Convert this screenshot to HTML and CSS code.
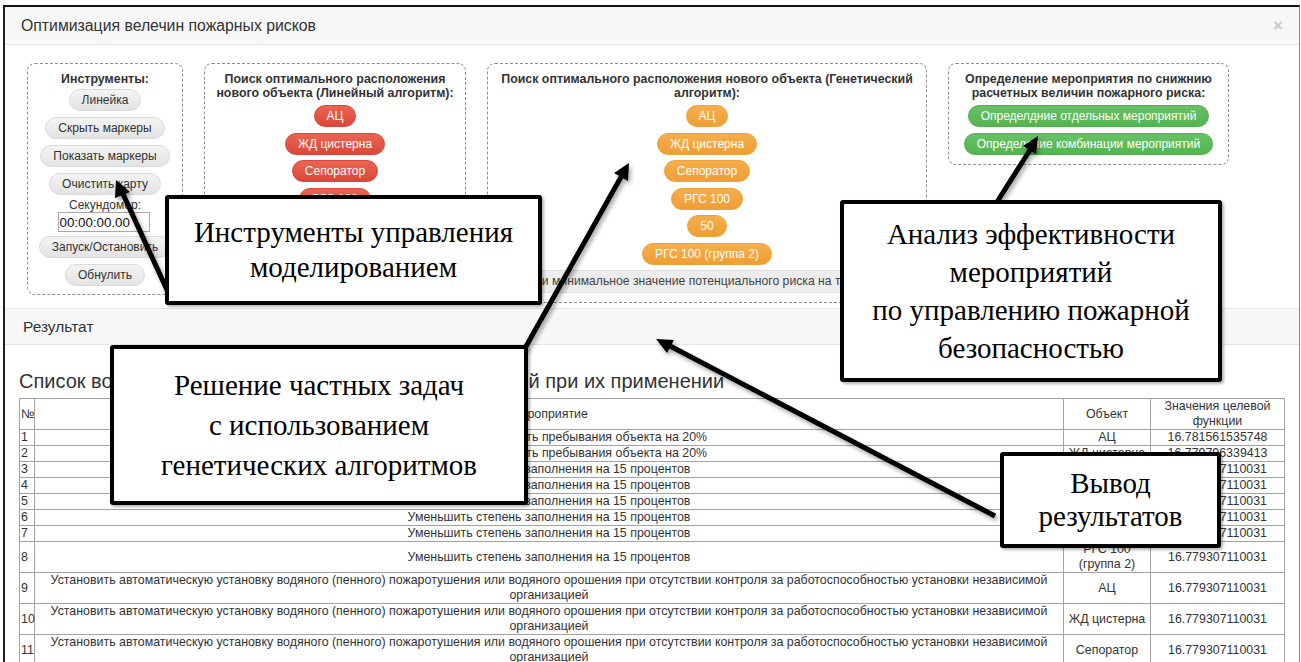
FILE: index.html
```html
<!DOCTYPE html>
<html lang="ru">
<head>
<meta charset="utf-8">
<title>Оптимизация велечин пожарных рисков</title>
<link rel="stylesheet" href="styles.css">
</head>
<body>
<div class="frame">
  <div class="modal-header">
    <span class="modal-title">Оптимизация велечин пожарных рисков</span>
    <span class="close">×</span>
  </div>

  <div class="controls">
    <section class="panel panel-tools">
      <div class="panel-title tools-title">Инструменты:</div>
      <span class="btn btn-gray">Линейка</span>
      <span class="btn btn-gray gap">Скрыть маркеры</span>
      <span class="btn btn-gray gap">Показать маркеры</span>
      <span class="btn btn-gray gap">Очистить карту</span>
      <div class="stopwatch-label">Секундомер:</div>
      <input class="stopwatch" type="text" value="00:00:00.00">
      <span class="btn btn-gray gap-sm">Запуск/Остановить</span>
      <span class="btn btn-gray gap">Обнулить</span>
    </section>

    <section class="panel panel-linear">
      <div class="panel-title">Поиск оптимального расположения<br>нового объекта (Линейный алгоритм):</div>
      <span class="btn btn-red">АЦ</span>
      <span class="btn btn-red step">ЖД цистерна</span>
      <span class="btn btn-red step">Сепоратор</span>
      <span class="btn btn-red step">РГС 100</span>
      <span class="btn btn-red step">50</span>
      <span class="btn btn-red step">РГС 100 (группа 2)</span>
    </section>

    <section class="panel panel-genetic">
      <div class="panel-title">Поиск оптимального расположения нового объекта (Генетический<br>алгоритм):</div>
      <span class="btn btn-orange">АЦ</span>
      <span class="btn btn-orange step">ЖД цистерна</span>
      <span class="btn btn-orange step">Сепоратор</span>
      <span class="btn btn-orange step">РГС 100</span>
      <span class="btn btn-orange step">50</span>
      <span class="btn btn-orange step">РГС 100 (группа 2)</span>
      <div class="min-risk step">Найти минимальное значение потенциального риска на территории</div>
    </section>

    <section class="panel panel-measures">
      <div class="panel-title">Определение мероприятия по снижнию<br>расчетных величин пожарного риска:</div>
      <span class="btn btn-green">Определдние отдельных мероприятий</span>
      <span class="btn btn-green step">Определение комбинации мероприятий</span>
    </section>
  </div>

  <div class="section-header">Результат</div>

  <div class="results">
    <h3 class="results-title">Список возможных значений функции для мероприятий при их применении</h3>
    <table class="results-table">
      <colgroup>
        <col class="col-num">
        <col class="col-measure">
        <col class="col-object">
        <col class="col-value">
      </colgroup>
      <thead>
        <tr>
          <th class="num">№</th>
          <th>Мероприятие</th>
          <th>Объект</th>
          <th>Значения целевой функции</th>
        </tr>
      </thead>
      <tbody>
        <tr><td class="num">1</td><td>Уменьшить длительность пребывания объекта на 20%</td><td>АЦ</td><td>16.781561535748</td></tr>
        <tr><td class="num">2</td><td>Уменьшить длительность пребывания объекта на 20%</td><td>ЖД цистерна</td><td>16.779796339413</td></tr>
        <tr><td class="num">3</td><td>Уменьшить степень заполнения на 15 процентов</td><td>Сепоратор</td><td>16.779307110031</td></tr>
        <tr><td class="num">4</td><td>Уменьшить степень заполнения на 15 процентов</td><td>РГС 100</td><td>16.779307110031</td></tr>
        <tr><td class="num">5</td><td>Уменьшить степень заполнения на 15 процентов</td><td>50</td><td>16.779307110031</td></tr>
        <tr><td class="num">6</td><td>Уменьшить степень заполнения на 15 процентов</td><td>АЦ</td><td>16.779307110031</td></tr>
        <tr><td class="num">7</td><td>Уменьшить степень заполнения на 15 процентов</td><td>ЖД цистерна</td><td>16.779307110031</td></tr>
        <tr><td class="num">8</td><td>Уменьшить степень заполнения на 15 процентов</td><td>РГС 100 (группа 2)</td><td>16.779307110031</td></tr>
        <tr><td class="num">9</td><td>Установить автоматическую установку водяного (пенного) пожаротушения или водяного орошения при отсутствии контроля за работоспособностью установки независимой<br>организацией</td><td>АЦ</td><td>16.779307110031</td></tr>
        <tr><td class="num">10</td><td>Установить автоматическую установку водяного (пенного) пожаротушения или водяного орошения при отсутствии контроля за работоспособностью установки независимой<br>организацией</td><td>ЖД цистерна</td><td>16.779307110031</td></tr>
        <tr><td class="num">11</td><td>Установить автоматическую установку водяного (пенного) пожаротушения или водяного орошения при отсутствии контроля за работоспособностью установки независимой<br>организацией</td><td>Сепоратор</td><td>16.779307110031</td></tr>
        <tr><td class="num">12</td><td>Установить автоматическую установку водяного (пенного) пожаротушения или водяного орошения при отсутствии контроля за работоспособностью установки независимой<br>организацией</td><td>РГС 100</td><td>16.779307110031</td></tr>
      </tbody>
    </table>
  </div>
</div>

<!-- pointer arrows from the captions to the parts of the window -->
<svg class="arrows" width="1301" height="662" viewBox="0 0 1301 662">
  <g stroke="#000" stroke-width="5" stroke-linecap="butt">
    <line x1="168" y1="292" x2="123" y2="194"/>
    <line x1="524" y1="350" x2="621" y2="177"/>
    <line x1="997" y1="202" x2="1030" y2="150"/>
    <line x1="995" y1="516" x2="670" y2="346"/>
  </g>
  <g fill="#000">
    <polygon points="116,180 130,192 115,198"/>
    <polygon points="629,163 628,181 614,173"/>
    <polygon points="1038,136 1036,154 1023,146"/>
    <polygon points="656,339 674,340 667,353"/>
  </g>
</svg>

<div class="callout callout-tools">
  <span>Инструменты управления</span>
  <span>моделированием</span>
</div>
<div class="callout callout-genetic">
  <span>Решение частных задач</span>
  <span>с использованием</span>
  <span>генетических алгоритмов</span>
</div>
<div class="callout callout-analysis">
  <span>Анализ эффективности</span>
  <span>мероприятий</span>
  <span>по управлению пожарной</span>
  <span>безопасностью</span>
</div>
<div class="callout callout-output">
  <span>Вывод</span>
  <span>результатов</span>
</div>
</body>
</html>
```

FILE: styles.css
```css
* {
  box-sizing: border-box;
}

html,
body {
  margin: 0;
  padding: 0;
  overflow: hidden;
  background: #fff;
}

body {
  position: relative;
  width: 1301px;
  height: 662px;
  font-family: "Liberation Sans", Arial, sans-serif;
  color: #333;
}

/* window frame */
.frame {
  margin: 5px 1px 0 3px;
  height: 720px;
  border-top: 2px solid #151515;
  border-left: 2px solid #1f1f1f;
  border-right: 1px solid #8a8a8a;
}

.modal-header {
  height: 38px;
  display: flex;
  align-items: center;
  justify-content: space-between;
  padding: 0 16px;
  background: #f7f7f7;
  border-bottom: 1px solid #e5e5e5;
}

.modal-title {
  font-size: 15.8px;
  color: #333;
}

.close {
  font-size: 17px;
  font-weight: bold;
  color: #c9c9c9;
  line-height: 1;
}

/* control panels */
.controls {
  display: flex;
  align-items: flex-start;
  gap: 21px;
  padding: 18px 0 0 22px;
}

.panel {
  display: flex;
  flex-direction: column;
  align-items: center;
  border: 1px dashed #8e8e8e;
  border-radius: 8px;
  padding: 8px 10px 9px;
}

.panel-tools {
  width: 156px;
  padding-bottom: 8px;
}

.panel-linear {
  width: 262px;
}

.panel-genetic {
  width: 440px;
}

.panel-measures {
  width: 281px;
}

.panel-title {
  font-size: 12.4px;
  font-weight: bold;
  line-height: 14px;
  text-align: center;
  white-space: nowrap;
  color: #333;
  margin-bottom: 5px;
}

.tools-title {
  margin-bottom: 3px;
}

.btn {
  display: inline-block;
  height: 22px;
  line-height: 20px;
  padding: 0 12px;
  border: 1px solid transparent;
  border-radius: 11px;
  font-size: 12px;
  white-space: nowrap;
}

.btn-gray {
  color: #333;
  background: linear-gradient(#f4f4f4, #e3e3e3);
  border-color: #dadada;
}

.btn-red {
  color: #fff;
  background: linear-gradient(#ea6552, #da4739);
  border-color: #d9493b;
}

.btn-orange {
  color: #fff;
  background: linear-gradient(#f5ae4c, #ee9f36);
  border-color: #eea23b;
}

.btn-green {
  color: #fff;
  background: linear-gradient(#68c266, #53b451);
  border-color: #52ae50;
}

.gap {
  margin-top: 6px;
}

.gap-sm {
  margin-top: 4px;
}

.step {
  margin-top: 5.5px;
}

.stopwatch-label {
  margin-top: 3px;
  font-size: 12px;
  line-height: 14px;
}

.stopwatch {
  width: 92px;
  height: 20px;
  margin: 0 3px 0 0;
  padding: 0 1px;
  border: 1px solid #a9a9a9;
  font-family: "Liberation Sans", Arial, sans-serif;
  font-size: 13.333px;
  color: #111;
  background: #fff;
}

.min-risk {
  align-self: stretch;
  height: 23px;
  line-height: 21px;
  border: 1px solid #e0e0e0;
  border-radius: 2px;
  background: #ededed;
  font-size: 12.2px;
  color: #444;
  text-align: center;
  white-space: nowrap;
  overflow: hidden;
}

/* results */
.section-header {
  margin-top: 5px;
  height: 37px;
  line-height: 35px;
  padding-left: 18px;
  background: #f7f7f7;
  border-top: 1px solid #e5e5e5;
  border-bottom: 1px solid #e5e5e5;
  font-size: 15.5px;
  color: #333;
}

.results {
  padding: 0 14px;
}

.results-title {
  margin: 26px 0 7px;
  font-size: 20px;
  font-weight: normal;
  line-height: 20px;
  color: #333;
  white-space: nowrap;
}

.results-table {
  width: 100%;
  table-layout: fixed;
  border-collapse: collapse;
  font-size: 12.4px;
  line-height: 15px;
  color: #333;
}

.col-num {
  width: 15px;
}

.col-object {
  width: 87px;
}

.col-value {
  width: 134px;
}

.results-table th,
.results-table td {
  border: 1px solid #a3a3a3;
  padding: 0 2px;
  text-align: center;
  vertical-align: middle;
  font-weight: normal;
}

.results-table .num {
  text-align: left;
  padding: 0 1px;
}

/* captions and pointers */
.arrows {
  position: absolute;
  left: 0;
  top: 0;
  pointer-events: none;
  filter: drop-shadow(2px 3px 2px rgba(0, 0, 0, 0.35));
}

.callout {
  position: absolute;
  display: flex;
  flex-direction: column;
  justify-content: center;
  align-items: center;
  background: #fff;
  border: 4px solid #000;
  border-radius: 3px;
  box-shadow: 2px 2px 3px rgba(0, 0, 0, 0.3);
  font-family: "Liberation Serif", "Times New Roman", serif;
  font-size: 29px;
  color: #000;
  white-space: nowrap;
}

.callout-tools {
  left: 165px;
  top: 195px;
  width: 377px;
  height: 110px;
  line-height: 35px;
}

.callout-genetic {
  left: 110px;
  top: 345px;
  width: 418px;
  height: 160px;
  line-height: 40px;
}

.callout-analysis {
  left: 840px;
  top: 200px;
  width: 382px;
  height: 182px;
  line-height: 38px;
}

.callout-output {
  left: 1000px;
  top: 452px;
  width: 221px;
  height: 96px;
  line-height: 33px;
}
```
